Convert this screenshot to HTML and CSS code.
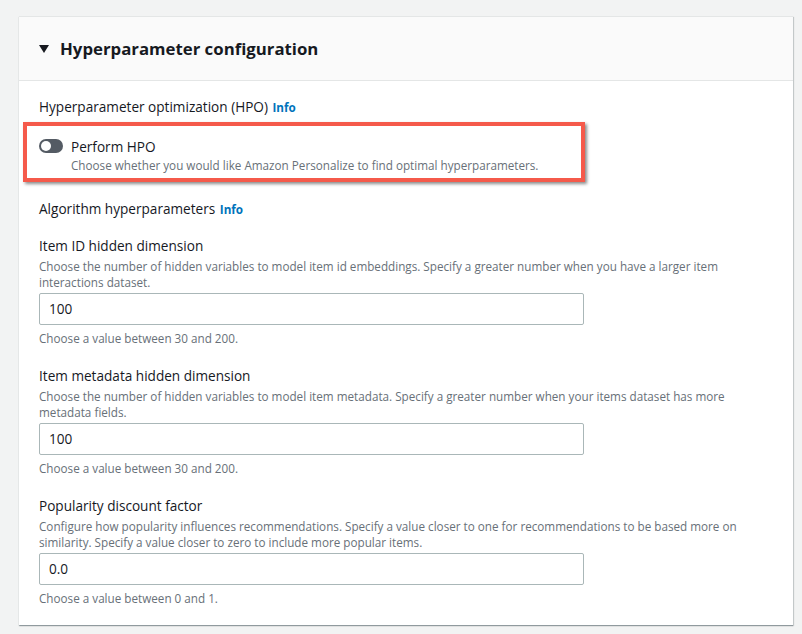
FILE: index.html
```html
<!DOCTYPE html>
<html>
<head>
<meta charset="utf-8">
<link rel="stylesheet" href="styles.css">
</head>
<body>
<div class="page">
  <section class="card">
    <header class="card-header">
      <span class="caret"></span>
      <h2 class="title">Hyperparameter configuration</h2>
    </header>
    <div class="card-body">
      <div class="group-label">Hyperparameter optimization (HPO) <a class="info">Info</a></div>
      <div class="highlight">
        <div class="toggle-row">
          <span class="toggle"><span class="knob"></span></span>
          <span class="toggle-label">Perform HPO</span>
        </div>
        <div class="toggle-desc">Choose whether you would like Amazon Personalize to find optimal hyperparameters.</div>
      </div>
      <div class="group-label algo">Algorithm hyperparameters <a class="info">Info</a></div>

      <div class="field">
        <div class="field-label">Item ID hidden dimension</div>
        <div class="field-desc">Choose the number of hidden variables to model item id embeddings. Specify a greater number when you have a larger item interactions dataset.</div>
        <div class="input">100</div>
        <div class="hint">Choose a value between 30 and 200.</div>
      </div>

      <div class="field">
        <div class="field-label">Item metadata hidden dimension</div>
        <div class="field-desc">Choose the number of hidden variables to model item metadata. Specify a greater number when your items dataset has more metadata fields.</div>
        <div class="input">100</div>
        <div class="hint">Choose a value between 30 and 200.</div>
      </div>

      <div class="field">
        <div class="field-label">Popularity discount factor</div>
        <div class="field-desc">Configure how popularity influences recommendations. Specify a value closer to one for recommendations to be based more on similarity. Specify a value closer to zero to include more popular items.</div>
        <div class="input">0.0</div>
        <div class="hint">Choose a value between 0 and 1.</div>
      </div>
    </div>
  </section>
</div>
</body>
</html>
```

FILE: styles.css
```css
html, body {
  margin: 0;
  padding: 0;
  background: #f2f3f3;
}
body {
  font-family: "Open Sans", "Noto Sans", Arial, sans-serif;
  color: #16191f;
  width: 802px;
  height: 634px;
  overflow: hidden;
}
.page {
  padding: 16px 9px 0 19px;
}
.card {
  background: #fff;
  border-top: 1px solid #e4e6e6;
  box-shadow: 0 1px 1px 0 rgba(0,28,36,0.3), 1px 1px 1px 0 rgba(0,28,36,0.15);
  width: 774px;
  height: 609px;
  box-sizing: border-box;
}
.card-header {
  background: #fafafa;
  border-bottom: 1px solid #e4e6e6;
  height: 64px;
  box-sizing: border-box;
  display: flex;
  align-items: center;
  padding: 0 0 0 20px;
}
.caret {
  width: 0;
  height: 0;
  border-left: 5px solid transparent;
  border-right: 5px solid transparent;
  border-top: 8px solid #16191f;
  margin-right: 11px;
  margin-top: 1px;
}
.title {
  margin: 0;
  font-size: 16.8px;
  font-weight: 700;
  color: #16191f;
}
.card-body {
  padding: 16px 20px 0 20px;
}
.group-label {
  font-size: 13.6px;
  line-height: 20px;
}
.info {
  color: #0073bb;
  font-weight: 700;
  font-size: 11.7px;
  margin-left: 1px;
}
.highlight {
  margin: 5px 0 0 -16px;
  width: 562px;
  height: 60px;
  box-sizing: border-box;
  border: 4px solid #f55a4b;
  box-shadow: 2px 2px 3px rgba(0,0,0,0.45);
  padding: 10px 0 0 12px;
}
.toggle-row {
  display: flex;
  align-items: center;
  gap: 8px;
  height: 20px;
}
.toggle {
  width: 24px;
  height: 14px;
  border-radius: 7px;
  background: #545b64;
  position: relative;
  flex: none;
}
.knob {
  position: absolute;
  left: 2px;
  top: 2px;
  width: 10px;
  height: 10px;
  border-radius: 50%;
  background: #fff;
}
.toggle-label {
  font-size: 13.6px;
}
.toggle-desc {
  font-size: 11.7px;
  color: #687078;
  margin-left: 32px;
  line-height: 18px;
}
.algo {
  margin-top: 17px;
}
.field {
  margin-top: 17px;
}
.field + .field {
  margin-top: 20px;
}
.field-label {
  font-size: 13.6px;
  line-height: 20px;
}
.field-desc {
  font-size: 11.7px;
  color: #687078;
  line-height: 16px;
  margin-top: 2px;
}
.input {
  margin-top: 3px;
  width: 545px;
  height: 32px;
  box-sizing: border-box;
  border: 1px solid #aab7b8;
  border-radius: 2px;
  font-size: 13.6px;
  line-height: 30px;
  padding-left: 9px;
}
.hint {
  font-size: 11.7px;
  color: #687078;
  line-height: 16px;
  margin-top: 5px;
}
```
